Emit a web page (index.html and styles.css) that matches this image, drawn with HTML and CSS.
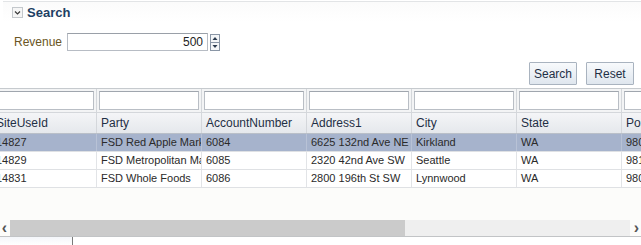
FILE: index.html
```html
<!DOCTYPE html>
<html>
<head>
<meta charset="utf-8">
<link rel="stylesheet" href="styles.css">
</head>
<body>
<div class="page">
  <div class="search-head">
    <span class="disclose"><svg width="9" height="9" viewBox="0 0 9 9"><path d="M2 3.5 L4.5 6 L7 3.5" fill="none" stroke="#3a3a3a" stroke-width="1.2"/></svg></span>
    <span class="head-title">Search</span>
  </div>
  <div class="form-row">
    <label class="lbl">Revenue</label>
    <div class="num-input">500</div>
    <div class="spin">
      <svg width="10" height="17" viewBox="0 0 10 17">
        <rect x="0.5" y="0.5" width="9" height="16" fill="#f4f6f8" stroke="#8a96a6"/>
        <line x1="1" y1="8.5" x2="9" y2="8.5" stroke="#8a96a6"/>
        <path d="M2.5 6 L5 3 L7.5 6 Z" fill="#2b3a4e"/>
        <path d="M2.5 11 L5 14 L7.5 11 Z" fill="#2b3a4e"/>
      </svg>
    </div>
  </div>
  <div class="btn-row">
    <button class="btn">Search</button>
    <button class="btn">Reset</button>
  </div>
  <div class="table-wrap">
    <div class="grid">
      <div class="row filter">
        <div class="cell"><div class="finput"></div></div>
        <div class="cell"><div class="finput"></div></div>
        <div class="cell"><div class="finput"></div></div>
        <div class="cell"><div class="finput"></div></div>
        <div class="cell"><div class="finput"></div></div>
        <div class="cell"><div class="finput"></div></div>
        <div class="cell"><div class="finput"></div></div>
      </div>
      <div class="row head">
        <div class="cell">SiteUseId</div>
        <div class="cell">Party</div>
        <div class="cell">AccountNumber</div>
        <div class="cell">Address1</div>
        <div class="cell">City</div>
        <div class="cell">State</div>
        <div class="cell">PostalCode</div>
      </div>
      <div class="row data selected">
        <div class="cell">14827</div>
        <div class="cell">FSD Red Apple Market</div>
        <div class="cell">6084</div>
        <div class="cell">6625 132nd Ave NE</div>
        <div class="cell">Kirkland</div>
        <div class="cell">WA</div>
        <div class="cell">98033</div>
      </div>
      <div class="row data">
        <div class="cell">14829</div>
        <div class="cell">FSD Metropolitan Market</div>
        <div class="cell">6085</div>
        <div class="cell">2320 42nd Ave SW</div>
        <div class="cell">Seattle</div>
        <div class="cell">WA</div>
        <div class="cell">98116</div>
      </div>
      <div class="row data">
        <div class="cell">14831</div>
        <div class="cell">FSD Whole Foods</div>
        <div class="cell">6086</div>
        <div class="cell">2800 196th St SW</div>
        <div class="cell">Lynnwood</div>
        <div class="cell">WA</div>
        <div class="cell">98036</div>
      </div>
    </div>
    <div class="empty"></div>
    <div class="hscroll">
      <span class="arrow">&#8249;</span>
      <div class="track"><div class="thumb"></div></div>
      <span class="arrow">&#8250;</span>
    </div>
  </div>
  <div class="bottom-tab"></div>
</div>
</body>
</html>
```
FILE: styles.css
```css
html, body {
  margin: 0;
  padding: 0;
  background: #ffffff;
}
body {
  font-family: "Liberation Sans", Tahoma, sans-serif;
  font-size: 12px;
  color: #2a2a2a;
  width: 641px;
  height: 245px;
  overflow: hidden;
}
.page {
  display: flex;
  flex-direction: column;
}
.search-head {
  height: 20px;
  margin-top: 1px;
  margin-left: 3px;
  border-top: 1px solid #e2e4e6;
  background: linear-gradient(#fbfbfb, #ffffff);
  display: flex;
  align-items: center;
  padding-left: 9px;
  gap: 4px;
}
.disclose {
  width: 9px;
  height: 9px;
  border: 1px solid #c4c8cc;
  background: #f6f6f6;
  display: flex;
}
.head-title {
  font-weight: bold;
  font-size: 13px;
  color: #1d3f63;
}
.form-row {
  display: flex;
  align-items: center;
  margin-top: 11px;
  padding-left: 14px;
  height: 18px;
}
.lbl {
  color: #6a5524;
  width: 53px;
}
.num-input {
  width: 135px;
  height: 16px;
  border: 1px solid #b7bcc4;
  border-top-color: #9aa0a8;
  background: #fff;
  text-align: right;
  padding-right: 4px;
  line-height: 16px;
  color: #222;
}
.spin {
  margin-left: 2px;
  display: flex;
}
.btn-row {
  display: flex;
  justify-content: flex-end;
  gap: 9px;
  padding-right: 7px;
  margin-top: 11px;
}
.btn {
  font-family: "Liberation Sans", Tahoma, sans-serif;
  font-size: 12px;
  color: #1f2f45;
  height: 23px;
  width: 48px;
  padding: 0;
  border: 1px solid #a9b3bf;
  border-radius: 1px;
  background: linear-gradient(#f8fafc, #dfe6ee);
}
.table-wrap {
  margin-top: 3px;
  overflow: hidden;
  border-top: 1px solid #c6cace;
  background: #fcfcfa;
}
.grid {
  margin-left: -8px;
  width: 760px;
}
.row {
  display: flex;
}
.cell {
  width: 104px;
  flex: none;
  border-right: 1px solid #d4d7db;
  white-space: nowrap;
  overflow: hidden;
  box-sizing: content-box;
}
.filter {
  height: 23px;
  background: #f3f4f5;
  border-bottom: 1px solid #d4d7db;
}
.filter .cell {
  padding: 2px;
  width: 100px;
  height: 19px;
}
.finput {
  height: 17px;
  border: 1px solid #b9bec5;
  border-top-color: #a0a6ae;
  background: #fff;
}
.head {
  height: 20px;
  background: linear-gradient(#f4f5f7, #e5e8ec);
  border-bottom: 1px solid #b9bfc8;
  color: #1f2f45;
}
.head .cell {
  padding-left: 4px;
  width: 100px;
  line-height: 20px;
}
.data {
  height: 17px;
  border-bottom: 1px solid #dfe1e4;
  background: #ffffff;
  font-size: 11px;
}
.data .cell {
  padding-left: 4px;
  width: 100px;
  line-height: 17px;
  border-right-color: #e2e4e7;
}
.data.selected {
  background: #a6b3cc;
}
.data.selected .cell {
  border-right-color: #b8c2d6;
}
.empty {
  height: 32px;
}
.hscroll {
  height: 16px;
  display: flex;
  align-items: center;
  border-bottom: 1px solid #c2c4c6;
  background: #fcfcfa;
}
.arrow {
  width: 9px;
  text-align: center;
  font-size: 16px;
  font-weight: bold;
  color: #555;
  line-height: 16px;
}
.track {
  flex: 1;
  height: 16px;
  background: #efefef;
  margin: 0 2px 0 1px;
  display: flex;
}
.thumb {
  width: 395px;
  height: 16px;
  background: #cbcbcb;
}
.bottom-tab {
  width: 72px;
  height: 8px;
  border-right: 1px solid #7a7a7a;
  background: linear-gradient(#f4f6fa, #ffffff);
}
```
